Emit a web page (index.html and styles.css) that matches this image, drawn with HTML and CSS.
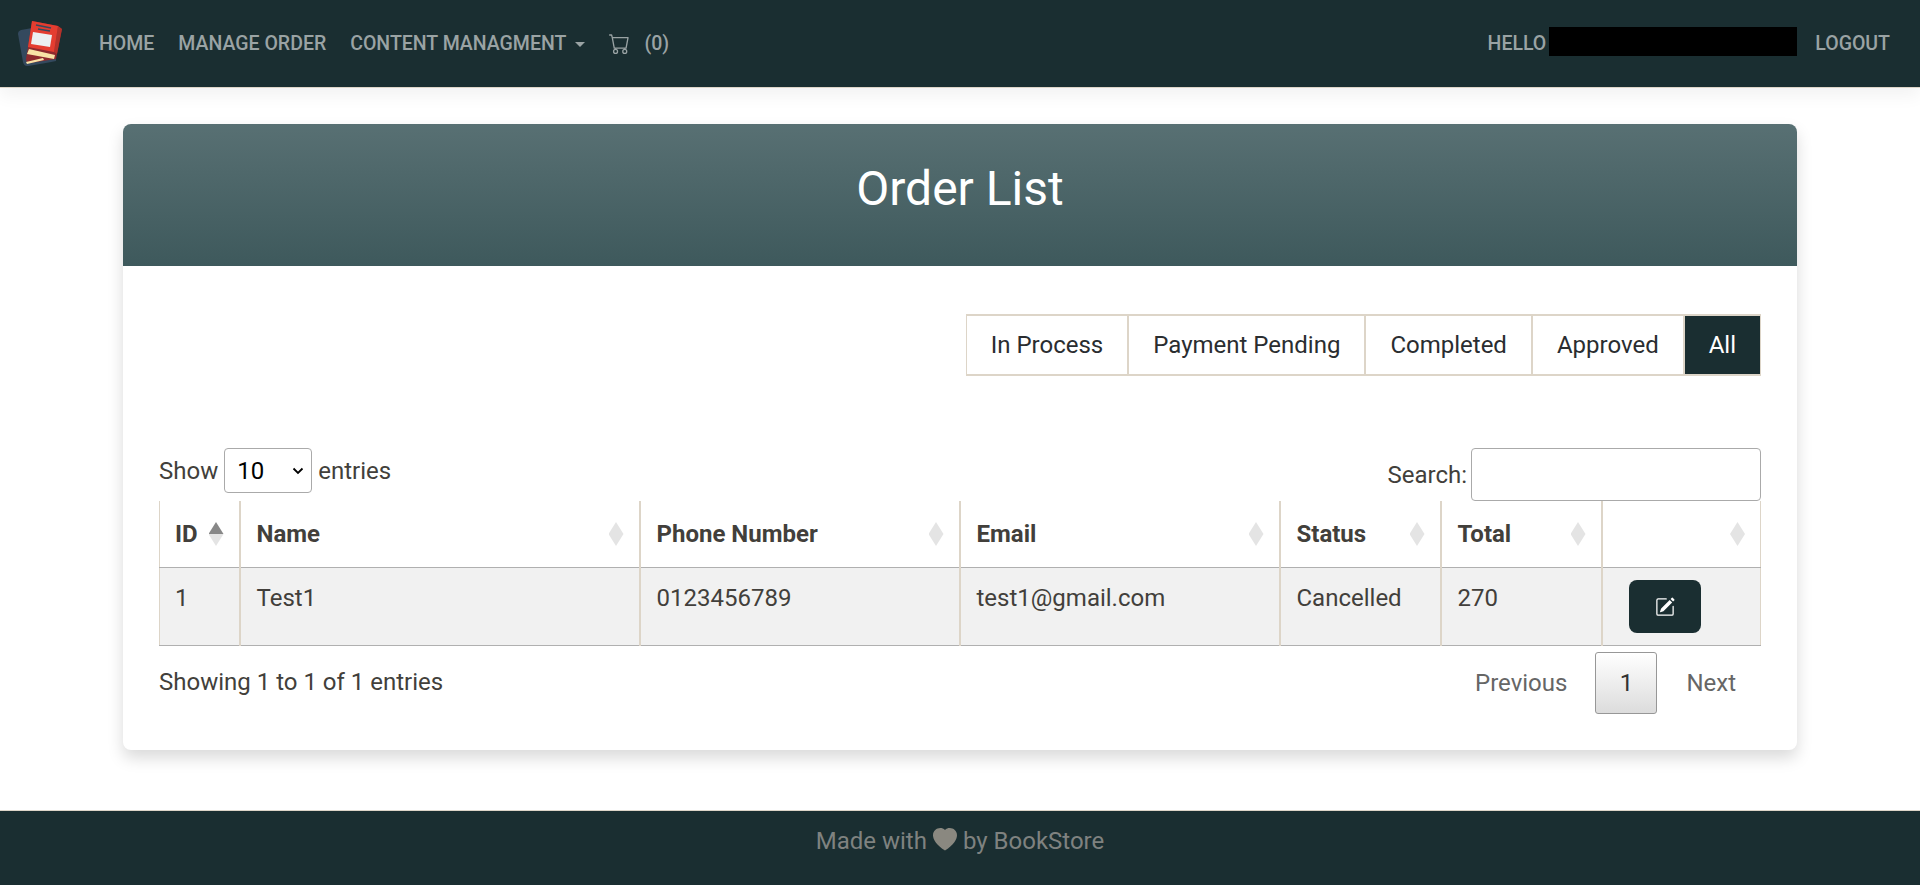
FILE: index.html
```html
<!DOCTYPE html>
<html lang="en">
<head>
<meta charset="UTF-8">
<meta name="viewport" content="width=device-width, initial-scale=1.0">
<title>Order List</title>
<link rel="stylesheet" href="styles.css">
</head>
<body>
<nav class="navbar">
    <svg class="logo" viewBox="0 0 45 45">
        <path d="M3 9 L20 6 L38 32 L38 40 Q12 45 9 45 Q6 45 5 41 L0 13 Q0 10 3 9z" fill="#34495e"/>
        <path d="M14 0 L40 5 L44 8 L39 33 L38 38 L12 42 Q8 42 8 38 L10 26z" fill="#8e2a2e"/>
        <path d="M40 5 L44 8 L39 33 L36 31z" fill="#b5322a"/>
        <path d="M14 0 L40 5 L36 31 L10 26z" fill="#e43d30"/>
        <path d="M11 28 L37 34 L36 38 L9 33z" fill="#f8e3a6"/>
        <path d="M8 41 L25 37 L26 39 L9 43z" fill="#f8e3a6"/>
        <path d="M18 4 L33 7 M20 8 L32 10" stroke="#34495e" stroke-width="1.6"/>
        <path d="M15 11 L34 14 L32 26 L13 23z" fill="#ecf0f1"/>
    </svg>
    <ul class="nav-links">
        <li><a href="#">Home</a></li>
        <li><a href="#">Manage Order</a></li>
        <li><a href="#" class="dropdown">Content Managment</a></li>
        <li>
            <a href="#" class="cart">
                <svg class="cart-icon" viewBox="0 0 16 16" fill="currentColor">
                    <path d="M0 1.5A.5.5 0 0 1 .5 1H2a.5.5 0 0 1 .485.379L2.89 3H14.5a.5.5 0 0 1 .491.592l-1.5 8A.5.5 0 0 1 13 12H4a.5.5 0 0 1-.491-.408L2.01 3.607 1.61 2H.5a.5.5 0 0 1-.5-.5zM3.102 4l1.313 7h8.17l1.313-7H3.102zM5 12a2 2 0 1 0 0 4 2 2 0 0 0 0-4zm7 0a2 2 0 1 0 0 4 2 2 0 0 0 0-4zm-7 1a1 1 0 1 1 0 2 1 1 0 0 1 0-2zm7 0a1 1 0 1 1 0 2 1 1 0 0 1 0-2z"/>
                </svg>
                <span>(0)</span>
            </a>
        </li>
    </ul>
    <div class="nav-user">
        <span>Hello</span>
        <span class="redacted"></span>
        <a href="#">Logout</a>
    </div>
</nav>

<main class="content">
    <section class="card">
        <header class="card-header">
            <h1>Order List</h1>
        </header>
        <div class="card-body">
            <div class="tabs">
                <a href="#" class="tab">In Process</a>
                <a href="#" class="tab">Payment Pending</a>
                <a href="#" class="tab">Completed</a>
                <a href="#" class="tab">Approved</a>
                <a href="#" class="tab active">All</a>
            </div>

            <div class="table-controls">
                <label class="length">Show
                    <select>
                        <option>10</option>
                        <option>25</option>
                        <option>50</option>
                    </select>
                    entries</label>
                <label class="search">Search:<input type="search"></label>
            </div>

            <table class="orders">
                <thead>
                    <tr>
                        <th class="col-id sorted">ID</th>
                        <th class="col-name">Name</th>
                        <th class="col-wide">Phone Number</th>
                        <th class="col-wide">Email</th>
                        <th class="col-num">Status</th>
                        <th class="col-num">Total</th>
                        <th class="col-last"></th>
                    </tr>
                </thead>
                <tbody>
                    <tr>
                        <td>1</td>
                        <td>Test1</td>
                        <td>0123456789</td>
                        <td>test1@gmail.com</td>
                        <td>Cancelled</td>
                        <td>270</td>
                        <td class="action">
                            <a href="#" class="edit-btn">
                                <svg viewBox="0 0 16 16" fill="currentColor">
                                    <path d="M15.502 1.94a.5.5 0 0 1 0 .706L14.459 3.69l-2-2L13.502.646a.5.5 0 0 1 .707 0l1.293 1.293zm-1.75 2.456-2-2L4.939 9.21a.5.5 0 0 0-.121.196l-.805 2.414a.25.25 0 0 0 .316.316l2.414-.805a.5.5 0 0 0 .196-.12l6.813-6.814z"/>
                                    <path d="M1 13.5A1.5 1.5 0 0 0 2.5 15h11a1.5 1.5 0 0 0 1.5-1.5v-6a.5.5 0 0 0-1 0v6a.5.5 0 0 1-.5.5h-11a.5.5 0 0 1-.5-.5v-11a.5.5 0 0 1 .5-.5H9a.5.5 0 0 0 0-1H2.5A1.5 1.5 0 0 0 1 2.5v11z"/>
                                </svg>
                            </a>
                        </td>
                    </tr>
                </tbody>
            </table>

            <div class="table-footer">
                <div class="info">Showing 1 to 1 of 1 entries</div>
                <div class="pagination">
                    <a href="#" class="page-link">Previous</a>
                    <a href="#" class="page-link current">1</a>
                    <a href="#" class="page-link">Next</a>
                </div>
            </div>
        </div>
    </section>
</main>

<footer class="footer">
    Made with
    <svg class="heart" viewBox="0 0 16 16" fill="currentColor">
        <path d="M8 1.314C12.438-3.248 23.534 4.735 8 15-7.534 4.736 3.562-3.248 8 1.314z"/>
    </svg>
    by BookStore
</footer>
</body>
</html>
```

FILE: styles.css
```css
* {
    box-sizing: border-box;
}
body {
    font-family: Roboto, "Liberation Sans", sans-serif;
    font-size: 24px;
    line-height: 1.5;
    color: #423f3b;
    background-color: #fff;
    margin: 0;
}
a {
    text-decoration: none;
    color: inherit;
}

.navbar {
    display: flex;
    align-items: center;
    height: 88px;
    padding: 0 30px 0 18px;
    background-color: #1a2e31;
    border-bottom: 1px solid #ddd5c8;
    box-shadow: 0 8px 16px rgba(0, 0, 0, .05);
    font-size: 19.5px;
    font-weight: 500;
    text-transform: uppercase;
    color: #9aa3a4;
}
.logo {
    width: 45px;
    height: 45px;
    margin-right: 36px;
    flex-shrink: 0;
}
.nav-links {
    display: flex;
    gap: 24px;
    list-style: none;
    margin: 0;
    padding: 0;
}
.dropdown::after {
    content: "";
    display: inline-block;
    margin-left: 9px;
    vertical-align: 3px;
    border-top: 5px solid;
    border-left: 5px solid transparent;
    border-right: 5px solid transparent;
}
.cart {
    display: flex;
    align-items: center;
    gap: 14px;
}
.cart-icon {
    width: 21px;
    height: 21px;
}
.nav-user {
    display: flex;
    align-items: center;
    margin-left: auto;
}
.redacted {
    width: 248px;
    height: 29px;
    margin: 0 18px 4px 3px;
    background-color: #000;
}

.content {
    padding: 36px 0 60px;
}
.card {
    width: 1674px;
    margin: 0 auto;
    background-color: #fff;
    border-radius: 8px;
    box-shadow: 0 8px 16px rgba(0, 0, 0, .15);
}
.card-header {
    height: 142px;
    display: flex;
    align-items: center;
    justify-content: center;
    padding-bottom: 12px;
    border-radius: 8px 8px 0 0;
    background: linear-gradient(#587073, #3e595c);
}
.card-header h1 {
    margin: 0;
    font-size: 48px;
    font-weight: 400;
    line-height: 1.2;
    color: #fff;
}
.card-body {
    padding: 48px 36px 36px;
}

.tabs {
    display: flex;
    justify-content: flex-end;
    margin-bottom: 72px;
}
.tab {
    padding: 11px 24px;
    height: 62px;
    color: #2a2d30;
    background-color: #fff;
    border: 2px solid #ddd5c8;
    border-left-width: 1px;
    border-right-width: 1px;
}
.tab.active {
    color: #fff;
    background-color: #1a2e31;
}

.table-controls {
    display: flex;
    justify-content: space-between;
    height: 53px;
}
.length {
    height: 45px;
    display: flex;
    align-items: center;
    gap: 6px;
}
.length select {
    appearance: none;
    width: 88px;
    height: 45px;
    padding: 0 12px;
    font-family: inherit;
    font-size: 24px;
    color: #000;
    background: #fff url("data:image/svg+xml,%3Csvg xmlns='http://www.w3.org/2000/svg' viewBox='0 0 12 8'%3E%3Cpath d='M1.5 1.5 6 6l4.5-4.5' fill='none' stroke='%23000' stroke-width='1.8'/%3E%3C/svg%3E") no-repeat right 7px center / 12px 8px;
    border: 1px solid #aaa;
    border-radius: 4px;
}
.search {
    display: flex;
    align-items: center;
    gap: 4px;
    height: 53px;
}
.search input {
    width: 290px;
    height: 53px;
    border: 1px solid #aaa;
    border-radius: 4px;
    background-color: #fff;
}

.orders {
    width: 1601px;
    table-layout: fixed;
    border-collapse: collapse;
}
.col-id {
    width: 80px;
}
.col-name {
    width: 400px;
}
.col-wide {
    width: 320px;
}
.col-num {
    width: 161px;
}
.col-last {
    width: 159px;
}
.orders th,
.orders td {
    padding: 12px 16px;
    text-align: left;
    vertical-align: top;
    border-left: 2px solid #ddd5c8;
    border-right: 2px solid #ddd5c8;
}
.orders th:first-child,
.orders td:first-child {
    padding-left: 15px;
    border-left-width: 1px;
}
.orders th:last-child,
.orders td:last-child {
    border-right-width: 1px;
}
.orders th {
    position: relative;
    height: 66px;
    padding-top: 15px;
    padding-bottom: 15px;
    font-weight: 700;
    border-bottom: 1px solid #b0b0b0;
}
.orders th::before,
.orders th::after {
    content: "";
    position: absolute;
    right: 15px;
    width: 15px;
    height: 12px;
    background-color: #e4e4e4;
}
.orders th::before {
    top: 21px;
    clip-path: polygon(50% 0, 100% 100%, 0 100%);
}
.orders th::after {
    top: 33px;
    clip-path: polygon(0 0, 100% 0, 50% 100%);
}
.orders th.sorted::before {
    background-color: #888;
}
.orders td {
    height: 78px;
    background-color: #f1f1f1;
    border-bottom: 1px solid #b0b0b0;
}
.orders td.action {
    padding: 12px 0 0 26px;
}
.edit-btn {
    display: flex;
    align-items: center;
    justify-content: center;
    width: 72px;
    height: 53px;
    border-radius: 8px;
    background-color: #1a2e31;
    color: #fff;
}
.edit-btn svg {
    width: 20px;
    height: 20px;
}

.table-footer {
    display: flex;
    justify-content: space-between;
    padding-top: 6px;
}
.info {
    padding-top: 12px;
}
.pagination {
    display: flex;
    gap: 9px;
    height: 62px;
    margin-right: 5px;
    color: #666;
}
.page-link {
    padding: 13px 20px 0;
}
.page-link.current {
    width: 62px;
    margin-left: -1px;
    padding: 12px 0 0;
    text-align: center;
    color: #333;
    border: 1px solid #979797;
    border-radius: 3px;
    background: linear-gradient(#fff, #dcdcdc);
}

.footer {
    display: flex;
    align-items: flex-start;
    justify-content: center;
    gap: 6px;
    height: 75px;
    padding-top: 12px;
    background-color: #1a2e31;
    border-top: 1px solid #ddd5c8;
    color: #7f8280;
}
.heart {
    width: 24px;
    height: 24px;
    margin-top: 5px;
    color: #8a8880;
}
```
